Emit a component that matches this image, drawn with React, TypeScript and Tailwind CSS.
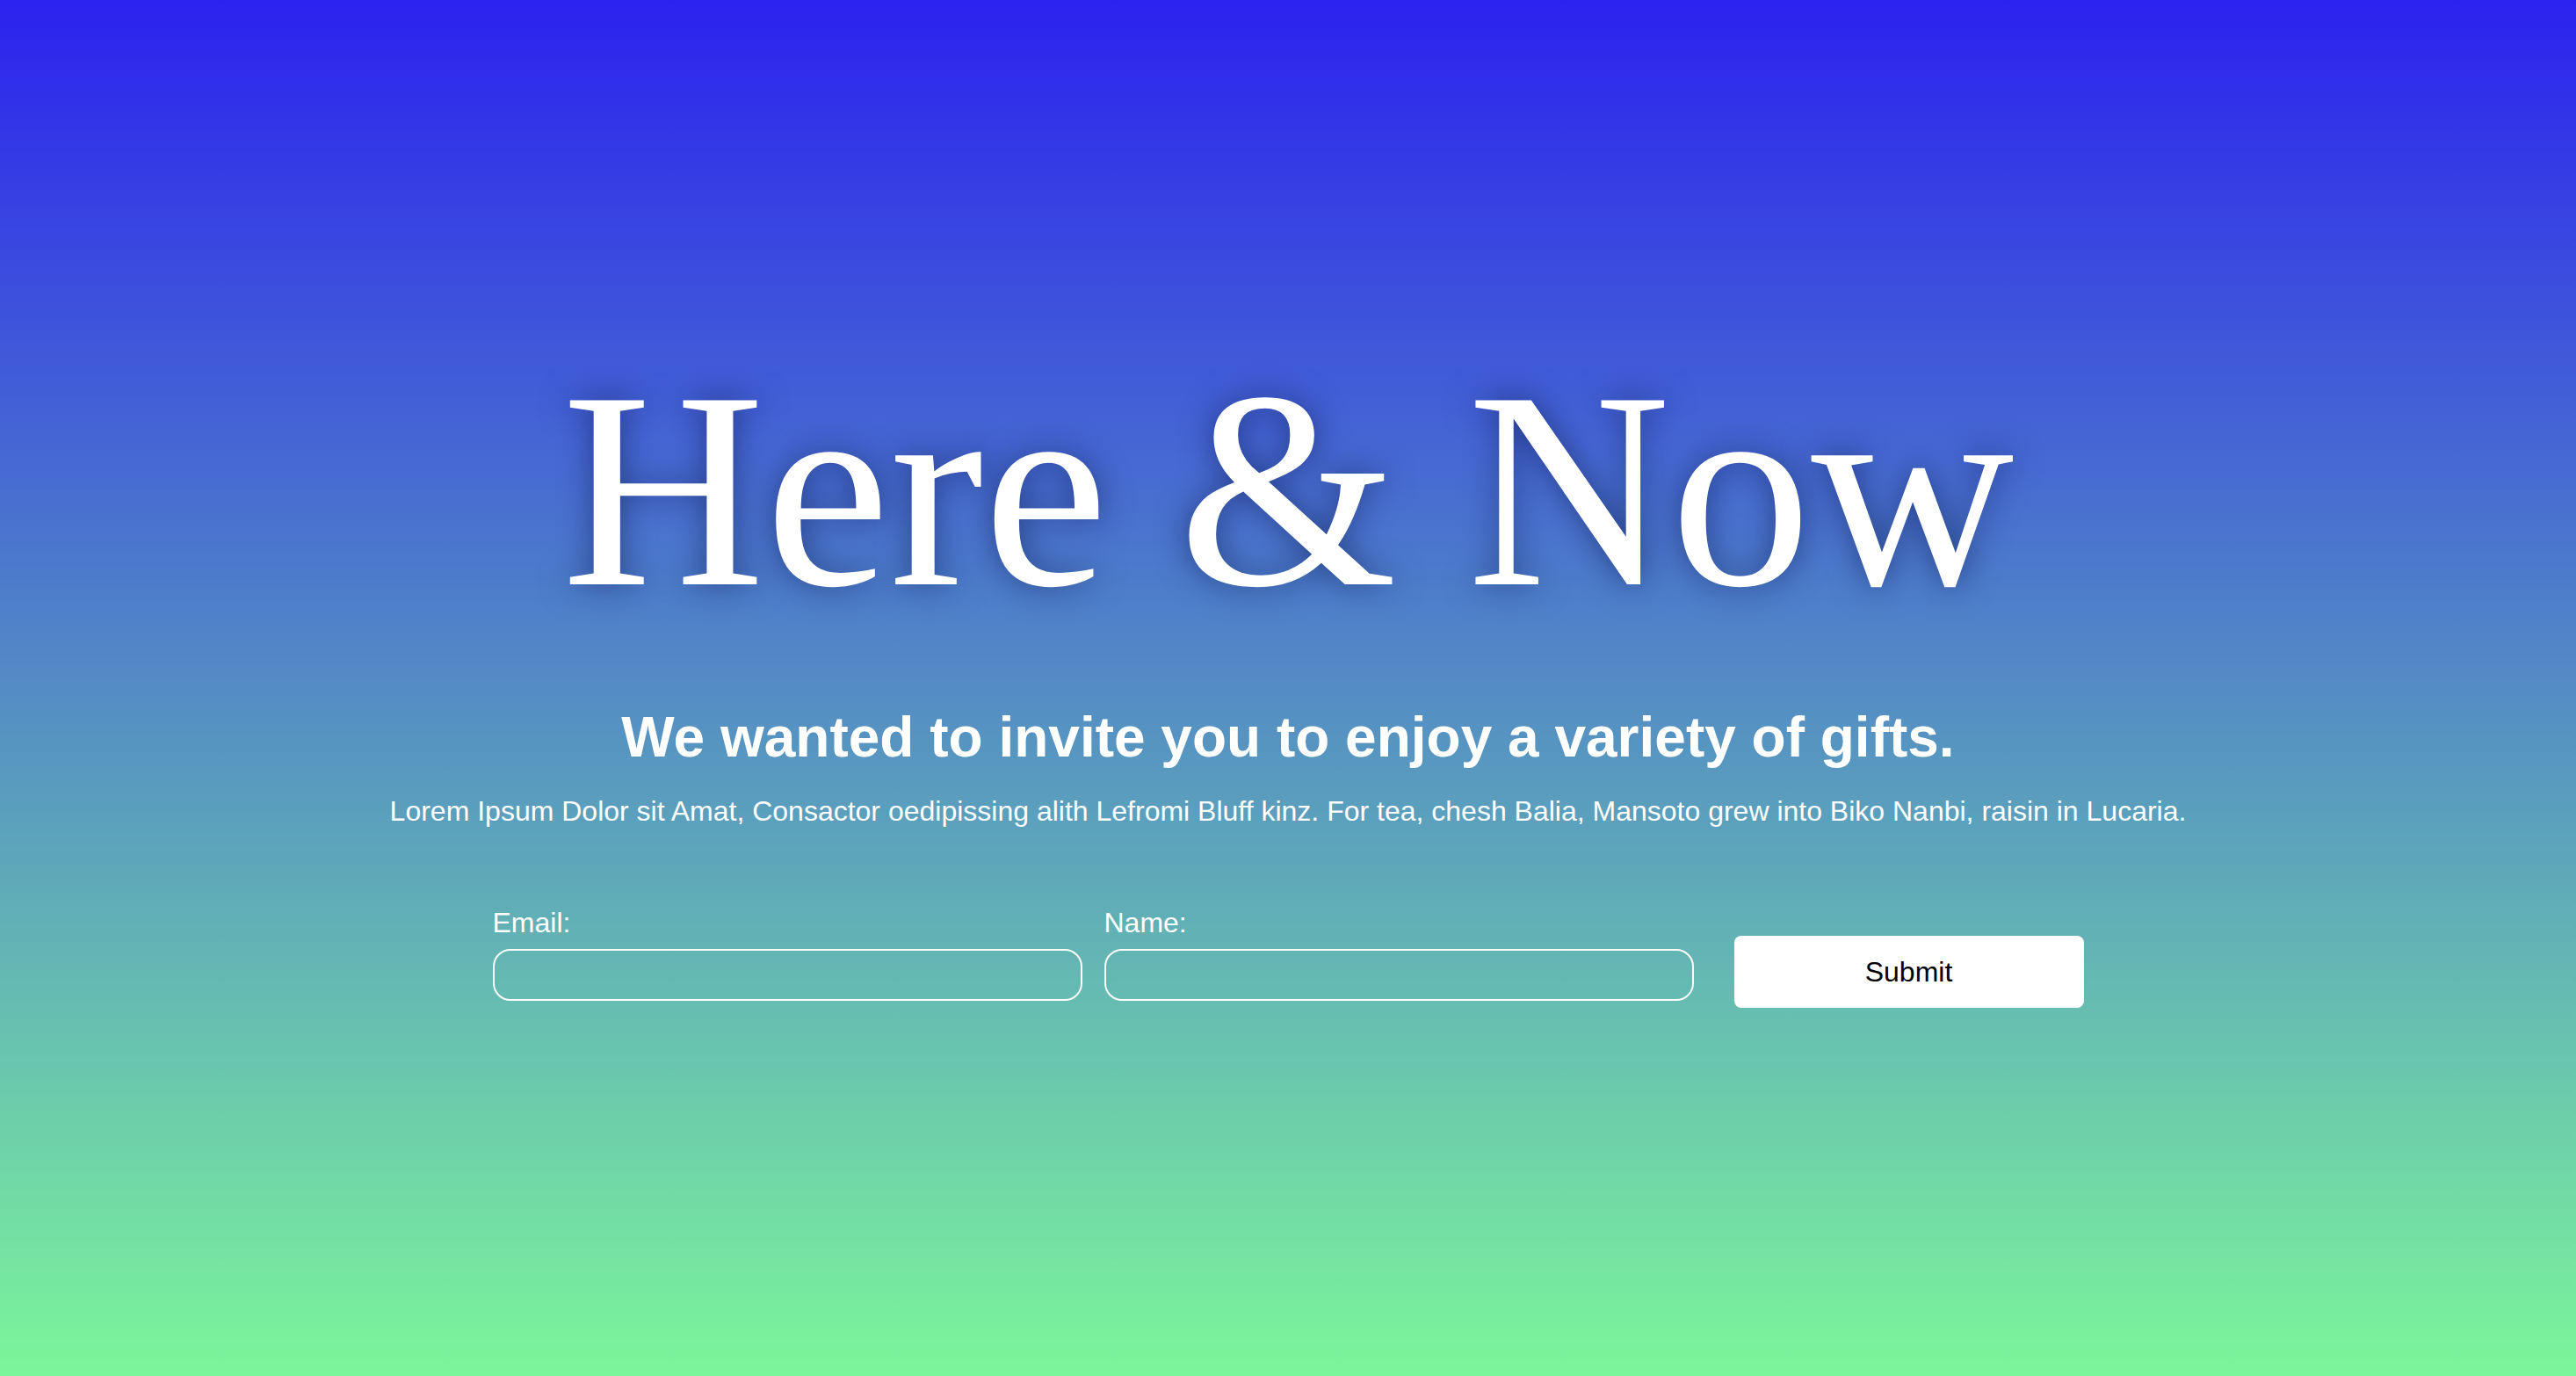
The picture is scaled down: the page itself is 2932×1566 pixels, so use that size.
import React, { useState } from 'react';

const sans = { fontFamily: '"Liberation Sans", Arial, sans-serif' };

const Field = ({ label, value, onChange }: { label: string; value: string; onChange: (v: string) => void }) => (
  <label className="flex flex-col w-[671px]">
    <span className="text-white text-[32px] leading-none">{label}</span>
    <input
      value={value}
      onChange={(e) => onChange(e.target.value)}
      className="mt-[14px] h-[59px] w-full rounded-[20px] border-2 border-white bg-transparent px-5 text-[28px] text-white outline-none"
    />
  </label>
);

const App = () => {
  const [email, setEmail] = useState('');
  const [name, setName] = useState('');

  return (
    <div
      className="min-h-screen w-full pb-[30px] flex flex-col items-center justify-center bg-[linear-gradient(to_bottom,#2b22ef,#7cf69a)]"
      style={sans}
    >
      <h1
        className="text-white text-[320px] leading-none font-normal [text-shadow:0_0_36px_rgba(10,20,70,0.55)]"
        style={{ fontFamily: '"Liberation Serif", "Times New Roman", serif' }}
      >
        Here &amp; Now
      </h1>
      <h2 className="mt-[90px] text-white text-[64px] leading-none font-bold">
        We wanted to invite you to enjoy a variety of gifts.
      </h2>
      <p className="mt-[36px] text-white text-[32px] leading-none">
        Lorem Ipsum Dolor sit Amat, Consactor oedipissing alith Lefromi Bluff kinz. For tea, chesh Balia, Mansoto grew into Biko Nanbi, raisin in Lucaria.
      </p>
      <form className="mt-[95px] flex items-end" onSubmit={(e) => e.preventDefault()}>
        <Field label="Email:" value={email} onChange={setEmail} />
        <div className="w-[25px]" />
        <Field label="Name:" value={name} onChange={setName} />
        <button
          type="submit"
          className="ml-[46px] mb-[-8px] h-[82px] w-[398px] rounded-[8px] bg-white text-black text-[32px]"
        >
          Submit
        </button>
      </form>
    </div>
  );
};

export default App;
